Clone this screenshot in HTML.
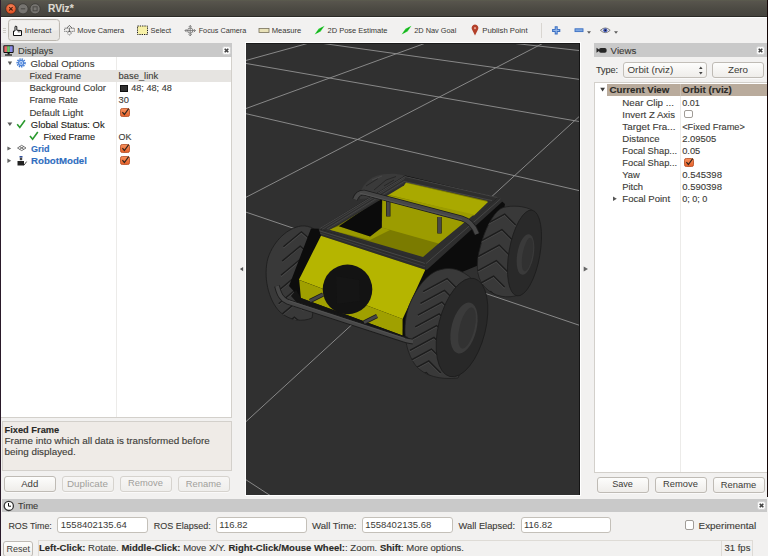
<!DOCTYPE html>
<html><head><meta charset="utf-8">
<style>
*{box-sizing:border-box;margin:0;padding:0}
html,body{width:768px;height:556px;overflow:hidden;background:#f2f1f0;font-family:"Liberation Sans",sans-serif;color:#3c3c3c}
.a{position:absolute}
.t{position:absolute;white-space:nowrap;font-size:9.5px;line-height:12px;color:#3c3b37;-webkit-text-stroke:0.12px currentColor}
.tb{font-size:7.8px;line-height:10px;color:#383733;-webkit-text-stroke:0 currentColor}
.hdr{position:absolute;background:#c9c9c9;height:14px}
.btn{position:absolute;border:1px solid #bfbbb5;border-radius:3px;background:linear-gradient(#fdfdfc,#efedea);font-size:9.7px;text-align:center;line-height:13.5px;color:#3c3b37;box-shadow:0 1px 0 rgba(255,255,255,.6)}
.btn.dis{color:#a19f9b;background:linear-gradient(#f7f6f5,#efeeec);border-color:#d6d3ce}
.inp{position:absolute;background:#fff;border:1px solid #c4c0b9;border-radius:3px;font-size:9.5px;line-height:14px;padding-left:2.5px;color:#3c3b37}
.cb{position:absolute;width:10px;height:9px}
.cls{position:absolute;width:8px;height:9px;background:#fbfbfb;border:1px solid #d0d0d0;border-radius:2px}
</style></head><body>
<svg width="0" height="0" style="position:absolute">
<defs>
<linearGradient id="cbg" x1="0" y1="0" x2="0" y2="1"><stop offset="0" stop-color="#f8935f"/><stop offset="1" stop-color="#e65f28"/></linearGradient>
<symbol id="chk" viewBox="0 0 11 10"><rect x="0.5" y="0.5" width="10" height="9" rx="2" fill="url(#cbg)" stroke="#b9532a"/><path d="M2.6,4.6 L4.8,7.2 L9.6,0.8" stroke="#33251c" stroke-width="1.3" fill="none"/></symbol>
<symbol id="clsx" viewBox="0 0 9 9"><rect x="0.5" y="0.5" width="8" height="8" rx="2" fill="#fbfbfb" stroke="#d2d2d2"/><path d="M2.7,2.7 L6.3,6.3 M6.3,2.7 L2.7,6.3" stroke="#444" stroke-width="1.6"/></symbol>
</defs>
</svg>
<!-- title bar -->
<div class="a" style="left:0;top:0;width:768px;height:17px;background:linear-gradient(#5c5e4e 0,#58554d 1px,#4d4b44 50%,#45433d);border-bottom:1px solid #2b2a26"></div>
<div class="a" style="left:0;top:17px;width:768px;height:1px;background:#fdfdfd"></div>
<svg class="a" style="left:0;top:0" width="60" height="18">
<defs><radialGradient id="rg" cx="0.5" cy="0.35" r="0.6"><stop offset="0" stop-color="#f78a61"/><stop offset="1" stop-color="#df4b1c"/></radialGradient></defs>
<circle cx="10.9" cy="8.8" r="5.2" fill="url(#rg)" stroke="#2e2a26" stroke-width="0.7"/>
<path d="M9.2,7.1 L12.6,10.5 M12.6,7.1 L9.2,10.5" stroke="#4d1d0d" stroke-width="1.1"/>
<circle cx="23" cy="8.8" r="5.1" fill="#767470" stroke="#3a3935" stroke-width="0.8"/>
<path d="M20.8,8.8 L25.2,8.8" stroke="#4a4945" stroke-width="1.1"/>
<circle cx="35.1" cy="8.8" r="5.1" fill="#767470" stroke="#3a3935" stroke-width="0.8"/>
<rect x="33.1" y="6.8" width="4" height="4" fill="none" stroke="#4a4945" stroke-width="1"/>
</svg>
<div class="t" style="left:48px;top:3px;font-size:10.2px;line-height:12px;font-weight:bold;color:#dfdbd2">RViz*</div>
<div class="a" style="left:0;top:0;width:1px;height:556px;background:#2a1a2a"></div>
<div class="a" style="left:767px;top:0;width:1px;height:497px;background:#140606"></div>

<!-- toolbar -->
<svg class="a" style="left:0;top:18px" width="640" height="25">
<g fill="#cfccc6"><rect x="3" y="10" width="3" height="1"/><rect x="3" y="12" width="3" height="1"/><rect x="3" y="14" width="3" height="1"/></g>
<rect x="8.5" y="1.5" width="51" height="21" rx="3" fill="#e9e7e4" stroke="#bcb8b1"/>
<rect x="9.5" y="2.5" width="49" height="10" rx="2" fill="#f1f0ee"/>
<!-- hand -->
<path d="M13.5,17.5 L13.5,13 L15,13 L15,8.6 Q15.9,7.6 16.8,8.6 L16.8,12.2 L21.5,12.6 L21.5,17.5 Z" fill="#fff" stroke="#111" stroke-width="1"/>
<path d="M18.3,12.4 L18.3,14.5 M19.9,12.5 L19.9,14.5" stroke="#111" stroke-width="0.7"/>
<!-- move camera -->
<g stroke="#4a4a4a" stroke-width="0.8" fill="none">
<path d="M66.6,10.3 L69.4,7.4 L72.2,10.3"/>
<rect x="64.6" y="10.2" width="9.8" height="3.2" stroke-dasharray="1.2,0.8"/>
<path d="M69.4,10.5 L69.4,14"/>
<circle cx="69.4" cy="15.2" r="1.7" stroke-dasharray="1,0.7"/>
</g>
<!-- select -->
<rect x="137.5" y="8" width="10" height="8.5" fill="#f7f0a6" stroke="#222" stroke-width="1" stroke-dasharray="1.3,1"/>
<!-- focus camera -->
<g stroke="#6a6a6a" stroke-width="0.8" fill="none">
<path d="M190.2,7.5 L190.2,17.8 M185,12.6 L195.4,12.6"/>
<path d="M188.6,9.1 L190.2,7.5 L191.8,9.1 M188.6,16.2 L190.2,17.8 L191.8,16.2 M186.6,11 L185,12.6 L186.6,14.2 M193.8,11 L195.4,12.6 L193.8,14.2"/>
<circle cx="190.2" cy="12.6" r="2.6"/>
</g>
<!-- measure -->
<rect x="259" y="10.5" width="10" height="4" fill="#e9e2b8" stroke="#77705a" stroke-width="0.8"/>
<!-- 2D pose / nav -->
<polygon points="314.6,16.4 320.6,13.4 324.6,7.8 318.6,10.8" fill="#25d22e"/><path d="M316.8,14.7 L322.4,9.6" stroke="#138a18" stroke-width="0.9"/>
<polygon points="401.5,16.4 407.5,13.4 411.5,7.8 405.5,10.8" fill="#25d22e"/><path d="M403.7,14.7 L409.3,9.6" stroke="#138a18" stroke-width="0.9"/>
<!-- publish point pin -->
<path d="M475,17.6 L472,11.6 A3.4,3.4 0 1 1 478,11.6 Z" fill="#b3402a"/>
<circle cx="475" cy="10.2" r="1.1" fill="#e9a090"/>
<!-- separator -->
<rect x="541" y="5" width="1" height="15" fill="#d9d6d1"/>
<!-- plus -->
<path d="M556.2,8.3 L556.2,16.5 M552.1,12.4 L560.3,12.4" stroke="#3b6fc2" stroke-width="3"/>
<path d="M556.2,9.4 L556.2,15.4 M553.2,12.4 L559.2,12.4" stroke="#9dbfee" stroke-width="1"/>
<!-- minus -->
<rect x="575" y="10.8" width="8" height="2.8" fill="#7fa8e2" stroke="#3b6fc2" stroke-width="0.9"/>
<path d="M587,13.2 L591,13.2 L589,15.8 Z" fill="#5d5d5d"/>
<!-- eye -->
<path d="M600.4,12.3 Q605.3,7.6 610.2,12.3 Q605.3,17 600.4,12.3 Z" fill="#e4e4ec" stroke="#555" stroke-width="0.7"/>
<circle cx="605.3" cy="12.3" r="2" fill="#3e56b8"/>
<circle cx="605.3" cy="12.3" r="0.8" fill="#111"/>
<path d="M614,13.2 L618,13.2 L616,15.8 Z" fill="#5d5d5d"/>
</svg>
<div class="t tb" style="left:24.8px;top:25.5px;font-size:8.0px">Interact</div>
<div class="t tb" style="left:77.3px;top:25.5px;font-size:7.48px">Move Camera</div>
<div class="t tb" style="left:150.6px;top:25.5px;font-size:7.41px">Select</div>
<div class="t tb" style="left:198.7px;top:25.5px;font-size:7.26px">Focus Camera</div>
<div class="t tb" style="left:271.7px;top:25.5px;font-size:7.61px">Measure</div>
<div class="t tb" style="left:327.5px;top:25.5px;font-size:7.51px">2D Pose Estimate</div>
<div class="t tb" style="left:414.2px;top:25.5px;font-size:7.36px">2D Nav Goal</div>
<div class="t tb" style="left:482.3px;top:25.5px;font-size:7.75px">Publish Point</div>
<!-- left panel: Displays -->
<div class="hdr" style="left:1px;top:43px;width:231px"></div>
<svg class="a" style="left:2px;top:44px" width="14" height="13">
<rect x="1.3" y="1.3" width="10.4" height="7.6" fill="#111" rx="0.8"/>
<rect x="2.3" y="2.2" width="2.8" height="5.8" fill="#e06a6a"/>
<rect x="5.1" y="2.2" width="2.8" height="5.8" fill="#6ac46a"/>
<rect x="7.9" y="2.2" width="2.8" height="5.8" fill="#8a8ae8"/>
<rect x="5.6" y="9" width="2" height="1.5" fill="#111"/>
<rect x="3" y="10.4" width="7" height="1.2" fill="#111"/>
</svg>
<div class="t" style="left:18px;top:44.5px;font-size:9.3px">Displays</div>
<svg class="a" style="left:221.5px;top:45.5px" width="9" height="9"><use href="#clsx"/></svg>
<div class="a" style="left:1px;top:57px;width:231px;height:361px;background:#fff;border-right:1px solid #d3d0cb;border-bottom:1px solid #d3d0cb"></div>
<div class="a" style="left:116px;top:57px;width:1px;height:360px;background:#ecebe9"></div>
<div class="a" style="left:1px;top:70px;width:230px;height:12px;background:#e6e4e1"></div>
<svg class="a" style="left:0;top:57px" width="116" height="112">
<path d="M7.8,4.4 L12.1,4.4 L9.95,8.3 Z" fill="#595959"/>
<path d="M7.4,65.4 L12.3,65.4 L9.85,68.9 Z" fill="#595959"/>
<path d="M7.4,89.6 L7.4,93.6 L11.2,91.6 Z" fill="#666"/>
<path d="M7.4,101.5 L7.4,106 L11.2,103.75 Z" fill="#666"/>
<!-- gear -->
<g transform="translate(21.1,5.9)">
<circle r="3.9" fill="none" stroke="#3f78d0" stroke-width="1.5" stroke-dasharray="1.4,0.9"/>
<circle r="3.1" fill="#4a82d8"/>
<circle r="1.9" fill="#cfe0fa"/>
<circle r="1" fill="#5b8fe0"/>
</g>
<!-- checks -->
<path d="M17.2,67.3 L19.8,70.4 L25,63.3" stroke="#2a9a2e" stroke-width="1.6" fill="none"/>
<path d="M30,79 L32.6,82.2 L37.8,75" stroke="#2a9a2e" stroke-width="1.6" fill="none"/>
<!-- grid icon -->
<g stroke="#555" stroke-width="0.8" fill="none">
<path d="M17.5,91 L21.7,88.3 L26,91 L21.7,93.6 Z"/>
<path d="M19.6,89.6 L23.9,92.3 M23.8,89.6 L19.6,92.3"/>
</g>
<!-- robot icon -->
<rect x="19.5" y="99" width="3" height="1.5" fill="#3050a0"/>
<rect x="19.8" y="100.6" width="2.4" height="2.6" fill="#444"/>
<path d="M17.5,108.5 L17.5,104 L24,104 L24,108.5 Z" fill="#222"/>
<path d="M24,108.2 L26.6,104.6" stroke="#333" stroke-width="0.9"/>
</svg>
<div class="t" style="left:30.5px;top:58px;font-size:9.68px">Global Options</div>
<div class="t" style="left:29.4px;top:70px;font-size:9.21px">Fixed Frame</div>
<div class="t" style="left:29.4px;top:82.2px;font-size:9.58px">Background Color</div>
<div class="t" style="left:29.4px;top:94.4px;font-size:9.19px">Frame Rate</div>
<div class="t" style="left:29.4px;top:106.5px;font-size:9.6px">Default Light</div>
<div class="t" style="left:30.8px;top:118.7px;font-size:9.44px;color:#1c1b18">Global Status: Ok</div>
<div class="t" style="left:43.5px;top:130.8px;font-size:9.21px;color:#1c1b18">Fixed Frame</div>
<div class="t" style="left:31px;top:143px;font-weight:bold;color:#2f6dc0;font-size:9.0px">Grid</div>
<div class="t" style="left:31px;top:155.1px;font-weight:bold;color:#2f6dc0;font-size:9.69px">RobotModel</div>
<div class="t" style="left:118.6px;top:70px;font-size:9.37px">base_link</div>
<div class="a" style="left:120.4px;top:84.6px;width:7.6px;height:7.2px;background:#303030;border:0.5px solid #111"></div>
<div class="t" style="left:131.2px;top:82.2px;font-size:9.13px">48; 48; 48</div>
<div class="t" style="left:118.6px;top:94.4px;font-size:9.35px">30</div>
<svg class="cb" style="left:119.9px;top:107.5px" width="11" height="10" viewBox="0 0 11 10"><use href="#chk"/></svg>
<div class="t" style="left:118.6px;top:130.8px;font-size:8.93px">OK</div>
<svg class="cb" style="left:119.9px;top:143.5px" width="11" height="10" viewBox="0 0 11 10"><use href="#chk"/></svg>
<svg class="cb" style="left:119.9px;top:155.5px" width="11" height="10" viewBox="0 0 11 10"><use href="#chk"/></svg>

<div class="a" style="left:1.5px;top:421px;width:230.5px;height:49.5px;background:#efebe7;border:1px solid #d3d0cb"></div>
<div class="t" style="left:4.5px;top:424px;font-weight:bold;font-size:9.3px;color:#2b2a27">Fixed Frame</div>
<div class="t" style="left:4.6px;top:435px;font-size:9.85px">Frame into which all data is transformed before</div>
<div class="t" style="left:4.6px;top:446px;font-size:9.85px">being displayed.</div>
<div class="btn" style="left:3.5px;top:475.5px;width:52.5px;height:16px;font-size:9.55px">Add</div>
<div class="btn dis" style="left:61.5px;top:475.5px;width:52px;height:16px;font-size:9.83px">Duplicate</div>
<div class="btn dis" style="left:119.5px;top:475.5px;width:52px;height:16px;font-size:9.35px">Remove</div>
<div class="btn dis" style="left:177.5px;top:475.5px;width:52px;height:16px;font-size:9.39px">Rename</div>
<!-- splitters -->
<svg class="a" style="left:236px;top:264px" width="10" height="10"><path d="M7.1,2.9 L7.1,7.2 L3.9,5.05 Z" fill="#555"/></svg>
<svg class="a" style="left:580px;top:264px" width="10" height="10"><path d="M3.7,2.5 L3.7,7.6 L8,5.05 Z" fill="#666"/></svg>
<div class="a" style="left:245px;top:42px;width:336px;height:454px;background:#fff"></div>
<div class="a" style="left:579px;top:43px;width:1px;height:451px;background:#111"></div>
<svg class="a" style="left:246px;top:43px" width="334" height="452" viewBox="246 43 334 452">
<rect x="246" y="43" width="334" height="452" fill="#303030"/>
<g stroke="#929292" stroke-width="0.9" fill="none">
<line x1="240.0" y1="62.1" x2="590.0" y2="-34.5"/>
<line x1="240.0" y1="110.7" x2="590.0" y2="-16.8"/>
<line x1="240.0" y1="200.4" x2="590.0" y2="18.9"/>
<line x1="240.0" y1="427.1" x2="590.0" y2="106.6"/>
<line x1="240.0" y1="13.3" x2="590.0" y2="51.7"/>
<line x1="240.0" y1="31.8" x2="590.0" y2="80.9"/>
<line x1="240.0" y1="62.4" x2="590.0" y2="123.4"/>
<line x1="240.0" y1="112.3" x2="590.0" y2="193.1"/>
<line x1="240.0" y1="210.1" x2="590.0" y2="328.9"/>
<line x1="240.0" y1="475.9" x2="590.0" y2="703.1"/>
</g>
<rect x="246" y="43" width="334" height="1" fill="#1a1a1a"/>
<!-- rear-left wheel (top part visible) -->
<path d="M360,194 C362,186 368,179 376,176 C384,173.5 396,173 404,175.5 L400,184 L372,198 L360,199 Z" fill="#3a3a3a"/>
<path d="M366,186 L378,178.5 M374,190 L386,180 L396,176.5 M384,186 L394,180" stroke="#272727" stroke-width="1" fill="none"/>
<path d="M372,180 L382,176" stroke="#4a4a4a" stroke-width="0.9" fill="none"/>
<!-- front-left wheel -->
<clipPath id="cFL"><path d="M301,226 C288,228 274,240 268,258 C263,276 268,300 280,312 C290,321 303,322 312,318 L325,240 C318,230 310,225 301,226 Z"/></clipPath>
<path d="M301,226 C288,228 274,240 268,258 C263,276 268,300 280,312 C290,321 303,322 312,318 L325,240 C318,230 310,225 301,226 Z" fill="#393939" stroke="#1e1e1e" stroke-width="0.9"/>
<g clip-path="url(#cFL)">
<path d="M283.4,248.0 L301.4,233.0 L309.4,240.0" stroke="#4a4a4a" stroke-width="1.04" fill="none"/>
<path d="M283.4,246.8 L301.4,231.8 L309.4,238.8" stroke="#1c1c1c" stroke-width="1.4" fill="none"/>
<path d="M282.2,262.2 L300.2,247.2 L308.2,254.2" stroke="#4a4a4a" stroke-width="1.04" fill="none"/>
<path d="M282.2,261.1 L300.2,246.1 L308.2,253.1" stroke="#1c1c1c" stroke-width="1.4" fill="none"/>
<path d="M281.0,276.5 L299.0,261.5 L307.0,268.5" stroke="#4a4a4a" stroke-width="1.04" fill="none"/>
<path d="M281.0,275.3 L299.0,260.3 L307.0,267.3" stroke="#1c1c1c" stroke-width="1.4" fill="none"/>
<path d="M279.9,290.7 L297.9,275.7 L305.9,282.7" stroke="#4a4a4a" stroke-width="1.04" fill="none"/>
<path d="M279.9,289.5 L297.9,274.5 L305.9,281.5" stroke="#1c1c1c" stroke-width="1.4" fill="none"/>
<path d="M278.7,304.9 L296.7,289.9 L304.7,296.9" stroke="#4a4a4a" stroke-width="1.04" fill="none"/>
<path d="M278.7,303.7 L296.7,288.7 L304.7,295.7" stroke="#1c1c1c" stroke-width="1.4" fill="none"/>
<path d="M277.6,319.1 L295.6,304.1 L303.6,311.1" stroke="#4a4a4a" stroke-width="1.04" fill="none"/>
<path d="M277.6,317.9 L295.6,302.9 L303.6,309.9" stroke="#1c1c1c" stroke-width="1.4" fill="none"/>
<path d="M276.4,333.3 L294.4,318.3 L302.4,325.3" stroke="#4a4a4a" stroke-width="1.04" fill="none"/>
<path d="M276.4,332.1 L294.4,317.1 L302.4,324.1" stroke="#1c1c1c" stroke-width="1.4" fill="none"/>
</g>
<!-- chassis black body -->
<path d="M319,228.8 L405.3,175.4 L497.7,197.6 L505,204 L496,258 L462,272 L440,290 L404,337 L300,298 L289,286 L311,228.5 Z" fill="#0c0c0c"/>
<!-- rear-right wheel -->
<clipPath id="cRR"><path d="M501,208.5 C507,205.5 520,205 530,209 C540,214 542,232 539,250 C536,272 528,292 515,296 C502,299 490,294 483,285 C476,276 476,262 480,248 C484,232 492,214 501,208.5 Z"/></clipPath>
<path d="M501,208.5 C507,205.5 520,205 530,209 C540,214 542,232 539,250 C536,272 528,292 515,296 C502,299 490,294 483,285 C476,276 476,262 480,248 C484,232 492,214 501,208.5 Z" fill="#393939" stroke="#1e1e1e" stroke-width="0.8"/>
<g clip-path="url(#cRR)">
<path d="M482.7,227.3 L504.7,215.3 L515.7,226.3" stroke="#4a4a4a" stroke-width="1.04" fill="none"/>
<path d="M482.7,226.1 L504.7,214.1 L515.7,225.1" stroke="#1c1c1c" stroke-width="1.4" fill="none"/>
<path d="M479.9,242.8 L501.9,230.8 L512.9,241.8" stroke="#4a4a4a" stroke-width="1.04" fill="none"/>
<path d="M479.9,241.6 L501.9,229.6 L512.9,240.6" stroke="#1c1c1c" stroke-width="1.4" fill="none"/>
<path d="M477.2,258.3 L499.2,246.3 L510.2,257.3" stroke="#4a4a4a" stroke-width="1.04" fill="none"/>
<path d="M477.2,257.1 L499.2,245.1 L510.2,256.1" stroke="#1c1c1c" stroke-width="1.4" fill="none"/>
<path d="M474.4,273.8 L496.4,261.8 L507.4,272.8" stroke="#4a4a4a" stroke-width="1.04" fill="none"/>
<path d="M474.4,272.6 L496.4,260.6 L507.4,271.6" stroke="#1c1c1c" stroke-width="1.4" fill="none"/>
<path d="M471.6,289.3 L493.6,277.3 L504.6,288.3" stroke="#4a4a4a" stroke-width="1.04" fill="none"/>
<path d="M471.6,288.1 L493.6,276.1 L504.6,287.1" stroke="#1c1c1c" stroke-width="1.4" fill="none"/>
<path d="M468.8,304.7 L490.8,292.7 L501.8,303.7" stroke="#4a4a4a" stroke-width="1.04" fill="none"/>
<path d="M468.8,303.5 L490.8,291.5 L501.8,302.5" stroke="#1c1c1c" stroke-width="1.4" fill="none"/>
</g>
<ellipse cx="524.5" cy="253" rx="15.5" ry="43.5" transform="rotate(10 524.5 253)" fill="#292929" stroke="#1c1c1c" stroke-width="0.8"/>
<ellipse cx="525.5" cy="254.4" rx="8.2" ry="20.5" transform="rotate(10 525.5 254.4)" fill="#3a3a3a"/>
<ellipse cx="527.5" cy="254.6" rx="5" ry="17" transform="rotate(10 527.5 254.6)" fill="#313131"/>
<!-- rim frame -->
<path d="M319.3,228.8 L405.3,176.6 L497.7,197.6 L424.8,262.7 Z" fill="#2e2e2e"/>
<!-- inner floor -->
<path d="M329,229.5 L404,181.5 L488,201 L423,257 Z" fill="#7b7b00"/>
<!-- floor light strip -->
<path d="M329,229.5 L338.9,226.2 L370.1,236.6 L381.8,227.5 L390,230 L370,240 Z" fill="#9a9a00"/>
<!-- rear top plate -->
<path d="M404,182.6 L488,202 L474,215.5 L385.5,194 Z" fill="#a9a900"/>
<!-- inner rear wall -->
<path d="M383,194 L474,214.5 L438.6,243.6 L381.8,227.5 Z" fill="#9c9c00"/>
<!-- black cavity -->
<path d="M338.9,226.2 L376,201 L382,199.5 L381.8,227.5 L370.1,236.6 Z" fill="#0b0b0b"/>
<!-- left rim band -->
<path d="M319.3,228.8 L405.3,175.4 L408,179.5 L404,185.5 L338.9,225 L329,230 Z" fill="#2e2e2e"/>
<path d="M322,229.5 L404.5,178.5" stroke="#444" stroke-width="0.9"/>
<path d="M328,229.6 L404,182.6" stroke="#3a3a3a" stroke-width="0.8"/>
<!-- rim edge lines -->
<g stroke="#474747" stroke-width="0.9" fill="none">
<path d="M319.3,228.8 L405.3,176.6 L497.7,197.6"/>
<path d="M327,229 L404,181.5 L492,200.6"/>
</g>
<!-- front rim band -->
<path d="M318.5,228.5 L424.8,260.8 L427,262 L425.3,269.8 L321,235.8 Z" fill="#2c2c2c"/>
<path d="M319.5,230.8 L425,263.4" stroke="#4a4a4a" stroke-width="0.9"/>
<path d="M320.2,233.2 L425.2,266.8" stroke="#3e3e3e" stroke-width="0.9"/>
<!-- right rim band -->
<path d="M424.8,260.8 L497.7,197.6 L503,201 L427,269.8 L425.3,269.8 Z" fill="#2e2e2e"/>
<path d="M426,263.5 L500.5,199" stroke="#4a4a4a" stroke-width="0.9"/>
<path d="M388.3,201 L388.3,216.5" stroke="#1c1c1c" stroke-width="4.4"/>
<path d="M388.3,201 L388.3,216" stroke="#484848" stroke-width="3"/>
<path d="M439.5,217 L439.5,233.5" stroke="#1c1c1c" stroke-width="4.4"/>
<path d="M439.5,217 L439.5,233" stroke="#484848" stroke-width="3"/>
<!-- roll bar -->
<path d="M355,199.5 C356.5,195 359.5,192.5 364,192.5 L462,218.5 C469,220.5 474,226 477,234" stroke="#1c1c1c" stroke-width="5.6" fill="none"/>
<path d="M355,199.5 C356.5,195 359.5,192.5 364,192.5 L462,218.5 C469,220.5 474,226 477,234" stroke="#474747" stroke-width="4.0" fill="none"/>
<path d="M360,193.2 L462,219.6" stroke="#575757" stroke-width="0.9" fill="none"/>
<!-- front face -->
<path d="M321,235.8 L425.3,269.8 L402.6,319.1 L298.9,279.7 Z" fill="#b5b500"/>
<path d="M299.2,279.9 L402.6,319.1 L402.5,335.6 L300.9,298.1 Z" fill="#a0a000"/>
<!-- front-right wheel -->
<clipPath id="cFR"><path d="M441.5,269.4 C428,272 416,288 409,306 C402,326 404,350 416,366 C425,376 440,380 458,378 L486,306 C482,288 472,276 460,271 C453,268 447,268 441.5,269.4 Z"/></clipPath>
<path d="M441.5,269.4 C428,272 416,288 409,306 C402,326 404,350 416,366 C425,376 440,380 458,378 L486,306 C482,288 472,276 460,271 C453,268 447,268 441.5,269.4 Z" fill="#393939" stroke="#1e1e1e" stroke-width="0.8"/>
<g clip-path="url(#cFR)">
<path d="M423.1,292.8 L447.1,279.8 L459.1,291.8" stroke="#4a4a4a" stroke-width="1.04" fill="none"/>
<path d="M423.1,291.6 L447.1,278.6 L459.1,290.6" stroke="#1c1c1c" stroke-width="1.4" fill="none"/>
<path d="M420.5,304.6 L444.5,291.6 L456.5,303.6" stroke="#4a4a4a" stroke-width="1.04" fill="none"/>
<path d="M420.5,303.4 L444.5,290.4 L456.5,302.4" stroke="#1c1c1c" stroke-width="1.4" fill="none"/>
<path d="M417.9,316.3 L441.9,303.3 L453.9,315.3" stroke="#4a4a4a" stroke-width="1.04" fill="none"/>
<path d="M417.9,315.1 L441.9,302.1 L453.9,314.1" stroke="#1c1c1c" stroke-width="1.4" fill="none"/>
<path d="M415.2,328.1 L439.2,315.1 L451.2,327.1" stroke="#4a4a4a" stroke-width="1.04" fill="none"/>
<path d="M415.2,326.9 L439.2,313.9 L451.2,325.9" stroke="#1c1c1c" stroke-width="1.4" fill="none"/>
<path d="M412.6,339.8 L436.6,326.8 L448.6,338.8" stroke="#4a4a4a" stroke-width="1.04" fill="none"/>
<path d="M412.6,338.6 L436.6,325.6 L448.6,337.6" stroke="#1c1c1c" stroke-width="1.4" fill="none"/>
<path d="M410.0,351.6 L434.0,338.6 L446.0,350.6" stroke="#4a4a4a" stroke-width="1.04" fill="none"/>
<path d="M410.0,350.4 L434.0,337.4 L446.0,349.4" stroke="#1c1c1c" stroke-width="1.4" fill="none"/>
<path d="M407.4,363.3 L431.4,350.3 L443.4,362.3" stroke="#4a4a4a" stroke-width="1.04" fill="none"/>
<path d="M407.4,362.1 L431.4,349.1 L443.4,361.1" stroke="#1c1c1c" stroke-width="1.4" fill="none"/>
<path d="M404.8,375.1 L428.8,362.1 L440.8,374.1" stroke="#4a4a4a" stroke-width="1.04" fill="none"/>
<path d="M404.8,373.9 L428.8,360.9 L440.8,372.9" stroke="#1c1c1c" stroke-width="1.4" fill="none"/>
<path d="M402.2,386.8 L426.2,373.8 L438.2,385.8" stroke="#4a4a4a" stroke-width="1.04" fill="none"/>
<path d="M402.2,385.6 L426.2,372.6 L438.2,384.6" stroke="#1c1c1c" stroke-width="1.4" fill="none"/>
</g>
<ellipse cx="462" cy="327.5" rx="23.5" ry="50.5" transform="rotate(14 462 327.5)" fill="#282828" stroke="#1c1c1c" stroke-width="0.8"/>
<ellipse cx="464" cy="328" rx="12.5" ry="26" transform="rotate(14 464 328)" fill="#3b3b3b"/>
<ellipse cx="467" cy="328" rx="7.5" ry="21" transform="rotate(14 467 328)" fill="#323232"/>
<!-- chassis underside shadow -->
<path d="M296,290 L300.9,298.1 L402.5,335.6 L408,337 L405,341 L298,304 L291,296 Z" fill="#141414"/>
<!-- front bumper -->
<path d="M277,286 C279,294 281,299 288,302 L405,340 C409,341 411,341.5 413,341.5" stroke="#1d1d1d" stroke-width="5.6" fill="none"/>
<path d="M277,286 C279,294 281,299 288,302 L405,340 C409,341 411,341.5 413,341.5" stroke="#474747" stroke-width="3.8" fill="none"/>
<path d="M288.5,300.6 L405,338.6" stroke="#555" stroke-width="0.9" fill="none"/>
<path d="M310,301 L323,294.5 M364,322.5 L377,316" stroke="#1d1d1d" stroke-width="4.2"/>
<path d="M310,301 L323,294.5 M364,322.5 L377,316" stroke="#464646" stroke-width="2.8"/>
<!-- ball -->
<circle cx="347.5" cy="289.4" r="24.8" fill="#131313"/>
<path d="M336,276 L359,280 L360,301 L337,304 Z" fill="#151515"/>
<rect x="579" y="43" width="1" height="452" fill="#141414"/>
</svg>
<!-- right panel: Views -->
<div class="hdr" style="left:594px;top:43px;width:173px"></div>
<svg class="a" style="left:595px;top:44px" width="14" height="13">
<path d="M1.5,3.8 L1.5,8.8 L4,7 L4,5.6 Z" fill="#262626"/>
<rect x="4" y="4" width="7.6" height="4.8" rx="1.8" fill="#262626"/>
</svg>
<div class="t" style="left:610.6px;top:44.5px;font-size:9.7px">Views</div>
<svg class="a" style="left:756px;top:46px" width="9" height="9"><use href="#clsx"/></svg>
<div class="t" style="left:595.9px;top:64px;font-size:9.1px">Type:</div>
<div class="btn" style="left:623px;top:61.5px;width:84px;height:16px;text-align:left;padding-left:3.5px;font-size:9.8px;border-color:#c3bfb9">Orbit (rviz)</div>
<svg class="a" style="left:697px;top:64px" width="8" height="12"><path d="M2,5 L3.8,2.6 L5.6,5 Z M2,8 L3.8,10.4 L5.6,8 Z" fill="#444"/></svg>
<div class="btn" style="left:712px;top:61.5px;width:52px;height:16px;font-size:9.8px">Zero</div>
<div class="a" style="left:594px;top:82px;width:173px;height:391px;background:#fff;border:1px solid #d3d0cb;border-right:none"></div>
<div class="a" style="left:607px;top:83.8px;width:160px;height:11.8px;background:#b9ab9c"></div>
<div class="a" style="left:680px;top:96px;width:1px;height:376px;background:#ecebe9"></div>
<div class="a" style="left:680px;top:84px;width:1px;height:12px;background:#c8bdb1"></div>
<svg class="a" style="left:596px;top:84px" width="26" height="120">
<path d="M4.2,3.7 L9,3.7 L6.6,7.6 Z" fill="#3a3a3a"/>
<path d="M17,112.6 L17,117 L20.8,114.8 Z" fill="#555"/>
</svg>
<div class="t" style="left:609.6px;top:84px;font-weight:bold;color:#2b2a27;font-size:9.71px">Current View</div>
<div class="t" style="left:682.3px;top:84px;font-weight:bold;color:#2b2a27;font-size:9.79px">Orbit (rviz)</div>
<div class="t" style="left:622.3px;top:96.5px;font-size:9.77px">Near Clip ...</div>
<div class="t" style="left:622.3px;top:108.5px;font-size:9.58px">Invert Z Axis</div>
<div class="t" style="left:622.3px;top:120.5px;font-size:9.85px">Target Fra...</div>
<div class="t" style="left:622.3px;top:132.5px;font-size:9.59px">Distance</div>
<div class="t" style="left:622.3px;top:144.5px;font-size:9.3px">Focal Shap...</div>
<div class="t" style="left:622.3px;top:156.5px;font-size:9.3px">Focal Shap...</div>
<div class="t" style="left:622.3px;top:168.5px;font-size:9.35px">Yaw</div>
<div class="t" style="left:622.3px;top:180.5px;font-size:9.36px">Pitch</div>
<div class="t" style="left:622.3px;top:192.5px;font-size:9.56px">Focal Point</div>
<div class="t" style="left:682.2px;top:96.5px;font-size:9.0px">0.01</div>
<div class="a" style="left:684.2px;top:110px;width:8.5px;height:8px;border:1px solid #a09c97;border-radius:2px;background:#fff"></div>
<div class="t" style="left:682.2px;top:120.5px;font-size:9.26px">&lt;Fixed Frame&gt;</div>
<div class="t" style="left:682.2px;top:132.5px;font-size:9.46px">2.09505</div>
<div class="t" style="left:682.2px;top:144.5px;font-size:9.3px">0.05</div>
<svg class="cb" style="left:683.8px;top:157.5px" width="11" height="10" viewBox="0 0 11 10"><use href="#chk"/></svg>
<div class="t" style="left:682.2px;top:168.5px;font-size:9.54px">0.545398</div>
<div class="t" style="left:682.2px;top:180.5px;font-size:9.54px">0.590398</div>
<div class="t" style="left:682.2px;top:192.5px;font-size:9.07px">0; 0; 0</div>
<div class="btn" style="left:596.5px;top:476.5px;width:52px;height:16px;font-size:9.1px">Save</div>
<div class="btn" style="left:654.5px;top:476.5px;width:52px;height:16px;font-size:9.35px">Remove</div>
<div class="btn" style="left:712.5px;top:476.5px;width:52px;height:16px;font-size:9.39px">Rename</div>

<!-- time panel -->
<div class="hdr" style="left:2px;top:498.5px;width:765px;height:13px"></div>
<svg class="a" style="left:3px;top:500px" width="12" height="12">
<circle cx="5.8" cy="5.9" r="4.6" fill="#fff" stroke="#333" stroke-width="1.3"/>
<path d="M5.5,3 L5.5,6.2 L8,6.2" stroke="#111" stroke-width="1" fill="none"/>
</svg>
<div class="t" style="left:18.1px;top:500px;font-size:9.2px">Time</div>
<svg class="a" style="left:757px;top:501px" width="9" height="9"><use href="#clsx"/></svg>
<div class="t" style="left:8.4px;top:519.7px;font-size:8.9px">ROS Time:</div>
<div class="inp" style="left:57.3px;top:517px;width:91px;height:16px">1558402135.64</div>
<div class="t" style="left:153.8px;top:519.7px;font-size:9px">ROS Elapsed:</div>
<div class="inp" style="left:215.8px;top:517px;width:91.7px;height:16px">116.82</div>
<div class="t" style="left:312px;top:519.7px;font-size:9.6px">Wall Time:</div>
<div class="inp" style="left:361.7px;top:517px;width:91.6px;height:16px">1558402135.68</div>
<div class="t" style="left:458.6px;top:519.7px;font-size:9.3px">Wall Elapsed:</div>
<div class="inp" style="left:520.5px;top:517px;width:90.8px;height:16px">116.82</div>
<div class="a" style="left:684.5px;top:520px;width:9.5px;height:9.5px;border:1px solid #a09c97;border-radius:2px;background:#fff"></div>
<div class="t" style="left:698.6px;top:519.7px;font-size:9.9px">Experimental</div>

<!-- status bar -->
<div class="btn" style="left:3px;top:540.6px;width:30.4px;height:16px;font-size:9.0px;line-height:14px">Reset</div>
<div class="a" style="left:37.8px;top:539.5px;width:684px;height:17px;border:1px solid #dedbd6;border-bottom:none;background:#f2f1f0"></div>
<div class="t" style="left:39px;top:542px;font-size:9.5px"><b style="color:#2b2a27">Left-Click:</b> Rotate. <b style="color:#2b2a27">Middle-Click:</b> Move X/Y. <b style="color:#2b2a27">Right-Click/Mouse Wheel:</b>: Zoom. <b style="color:#2b2a27">Shift</b>: More options.</div>
<div class="a" style="left:721px;top:539.5px;width:32px;height:17px;border:1px solid #dedbd6;border-bottom:none"></div>
<div class="t" style="left:724.5px;top:542px;font-size:9.5px">31 fps</div>
</body></html>
